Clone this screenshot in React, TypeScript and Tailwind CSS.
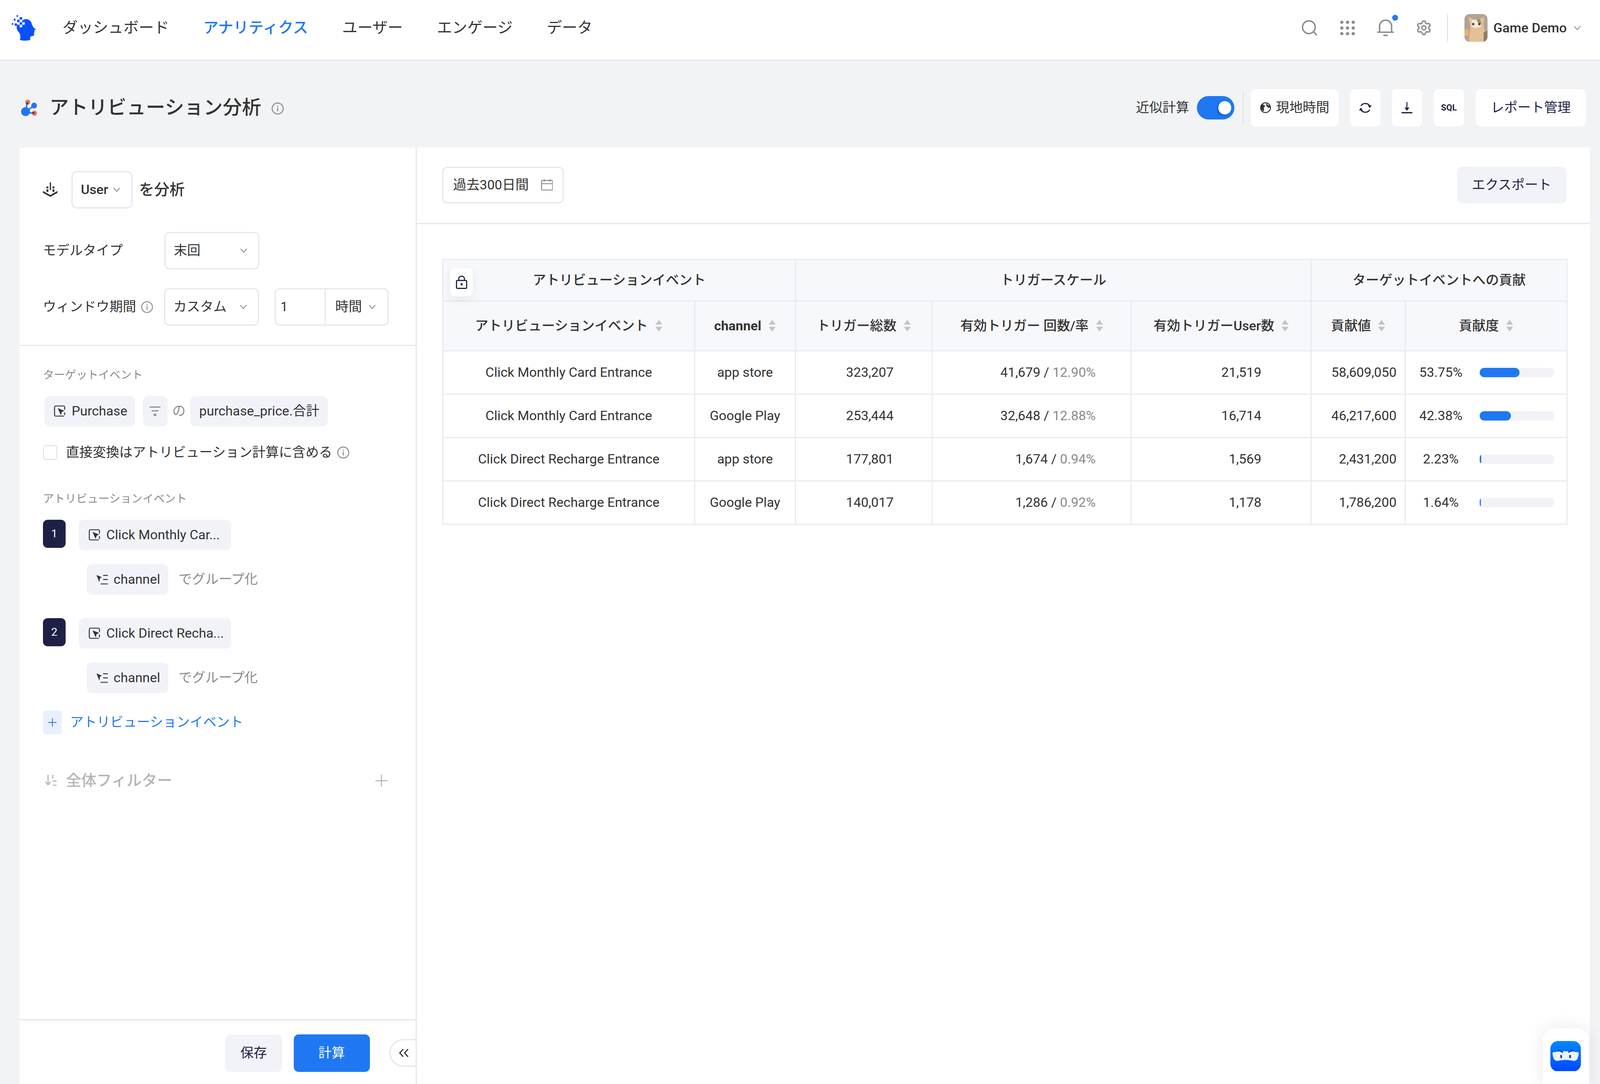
import type { ReactNode } from "react";
import { Settings } from "lucide-react";

// widths and type are in vw (reference px / 50.42): the browser window can be narrower than the 5042px reference
const navy = "#1e2145";

const Chevron = ({ className = "w-[0.436vw] h-auto shrink-0" }: { className?: string }) => (
	<svg viewBox="0 0 22 14" className={className} fill="none" stroke="#8a8a8a" strokeWidth="2.6">
		<path d="M1.5 1.5 11 12.5 20.5 1.5" />
	</svg>
);

const InfoIcon = ({ className = "w-[0.754vw] h-auto shrink-0" }: { className?: string }) => (
	<svg viewBox="0 0 38 38" className={className} fill="none">
		<circle cx="19" cy="19" r="17" stroke="#8a8a8a" strokeWidth="3" />
		<rect x="17.5" y="16" width="3" height="12" fill="#8a8a8a" />
		<rect x="17.5" y="10" width="3" height="3.4" fill="#8a8a8a" />
	</svg>
);

const EventIcon = () => (
	<svg viewBox="0 0 38 36" className="w-[0.754vw] h-auto shrink-0" fill="none">
		<path d="M34 14V6a4 4 0 0 0-4-4H6a4 4 0 0 0-4 4v24a4 4 0 0 0 4 4h26" stroke="#333" strokeWidth="3" />
		<path d="M12 9 33 17l-8 4-3 10z" fill="#333" />
		<path d="M34 22v9" stroke="#333" strokeWidth="3" />
	</svg>
);

const GroupIcon = () => (
	<svg viewBox="0 0 36 32" className="w-[0.714vw] h-auto shrink-0" fill="none">
		<path d="M0 2 17 9l-6 3-2 13z" fill="#333" />
		<path d="M21 3h15M21 16h15M13 30h23" stroke="#333" strokeWidth="3" />
	</svg>
);

const SortIcon = () => (
	<svg viewBox="0 0 24 37" className="w-[0.476vw] h-auto shrink-0" fill="#c4c4c4">
		<path d="M12 0 23 15H1z" />
		<path d="M12 37 23 22H1z" />
	</svg>
);

const Logo = () => (
	<svg viewBox="37 32 76 80" className="w-[1.507vw] h-auto shrink-0">
		<path
			d="M66 50 80 44c11 0 18 6 20 14 1 5 3 9 6 13l7 6-5 3 1 5-2 3 1 6-3 3-9 2-1 7 1 4c-10 3-24 3-34 0l2-4v-9c0-7-5-12-9-17-3-6-3-13-1-20z"
			fill="#0a50ff"
		/>
		<g fill="#0a50ff">
			<rect x="62" y="38" width="8" height="8" />
			<rect x="54" y="46" width="8" height="8" />
			<rect x="62" y="54" width="8" height="8" />
			<rect x="46" y="58" width="8" height="7" />
			<rect x="43" y="43" width="6" height="6" />
			<rect x="52" y="32" width="5" height="5" />
			<rect x="37" y="57" width="5" height="5" />
		</g>
		<g fill="#fff">
			<rect x="62" y="46" width="8" height="8" />
			<rect x="70" y="54" width="8" height="8" />
			<rect x="62" y="62" width="8" height="8" />
			<rect x="54" y="54" width="8" height="8" />
		</g>
	</svg>
);

const TitleIcon = () => (
	<svg viewBox="0 0 51 52" className="w-[1.011vw] h-auto shrink-0">
		<circle cx="21" cy="8" r="8" fill="#f4704a" />
		<ellipse cx="41" cy="19" rx="9" ry="9.5" fill="#1f78f2" />
		<ellipse cx="42" cy="43" rx="8" ry="8.5" fill="#f4704a" />
		<circle cx="14" cy="38" r="14" fill="#1f78f2" />
		<path d="M19 8 17 26M38 21 22 33M18 42h22" stroke="#1f78f2" strokeWidth="4.5" />
		<path d="M20 9 19 15M36 42h6" stroke="#1e2145" strokeWidth="4" />
	</svg>
);

const Avatar = () => (
	<svg
		viewBox="0 0 72 72"
		preserveAspectRatio="xMidYMid slice"
		className="w-[1.428vw] h-[71px] rounded-[13px] shrink-0"
	>
		<rect width="72" height="72" fill="#b3a295" />
		<path d="M0 42c6-2 12-2 18-1l-1 15H0z" fill="#eeb267" />
		<path d="M18 72c1-14 2-28 4-38-2-9-4-18-5-28l12 9h16l12-9-1 24c3 14 5 28 5 42z" fill="#e3c097" />
		<path d="M25 16c4-2 16-2 20 0l5 15c-5 7-21 7-26 0z" fill="#f3e8d8" />
		<path d="M38 14h9l4 13-10-5z" fill="#a88a66" />
		<circle cx="29" cy="26" r="3" fill="#4a3b2e" />
		<circle cx="45" cy="26" r="3" fill="#4a3b2e" />
		<path d="M56 48 72 40v32H56z" fill="#8f7d69" />
	</svg>
);

const Select = ({ label, className }: { label: string; className: string }) => (
	<div
		className={`flex items-center justify-between h-[96px] pl-[0.516vw] pr-[0.674vw] border-[3px] border-[#e5e7f0] rounded-[13px] bg-white ${className}`}
	>
		<span>{label}</span>
		<Chevron />
	</div>
);

const Pill = ({ children, className = "" }: { children: ReactNode; className?: string }) => (
	<div className={`flex items-center h-[78px] rounded-[13px] bg-[#f1f3f9] ${className}`}>{children}</div>
);

const EventRow = ({ num, label }: { num: number; label: string }) => (
	<div>
		<div className="flex items-start">
			<div className="flex items-center justify-center w-[1.428vw] h-[72px] rounded-[12px] bg-[#1e2145] text-white text-[0.694vw]">
				{num}
			</div>
			<Pill className="w-[9.52vw] ml-[0.833vw] pl-[0.595vw]">
				<EventIcon />
				<span className="ml-[0.357vw] whitespace-nowrap">{label}</span>
			</Pill>
		</div>
		<div className="flex items-center mt-[36px] ml-[2.737vw]">
			<Pill className="w-[5.117vw] pl-[0.615vw]">
				<GroupIcon />
				<span className="ml-[0.357vw]">channel</span>
			</Pill>
			<span className="ml-[0.635vw] text-[#8a8a8a]">でグループ化</span>
		</div>
	</div>
);

const rows = [
	{ name: "Click Monthly Card Entrance", channel: "app store", total: "323,207", valid: "41,679", rate: "12.90%", users: "21,519", value: "58,609,050", pct: "53.75%", bar: "w-[53.75%]" },
	{ name: "Click Monthly Card Entrance", channel: "Google Play", total: "253,444", valid: "32,648", rate: "12.88%", users: "16,714", value: "46,217,600", pct: "42.38%", bar: "w-[42.38%]" },
	{ name: "Click Direct Recharge Entrance", channel: "app store", total: "177,801", valid: "1,674", rate: "0.94%", users: "1,569", value: "2,431,200", pct: "2.23%", bar: "w-[2.23%]" },
	{ name: "Click Direct Recharge Entrance", channel: "Google Play", total: "140,017", valid: "1,286", rate: "0.92%", users: "1,178", value: "1,786,200", pct: "1.64%", bar: "w-[1.64%]" },
];

const heads = ["アトリビューションイベント", "channel", "トリガー総数", "有効トリガー 回数/率", "有効トリガーUser数", "貢献値", "貢献度"];

const cell = "border-[3px] border-[#e9ebf2] p-0";
const iconButton = "flex items-center justify-center w-[1.904vw] h-[96px] ml-[0.714vw] rounded-[13px] bg-white";

export default function App() {
	return (
		<div
			className="relative flex flex-col w-full h-screen overflow-hidden bg-[#f2f3f5] text-[#333] text-[0.833vw]"
			style={{ fontFamily: 'Roboto, "Noto Sans CJK JP", sans-serif' }}
		>
			<header className="flex items-center shrink-0 h-[156px] pb-[10px] pl-[0.734vw] pr-[1.19vw] bg-white border-b-[3px] border-[#e3e6ef]">
				<Logo />
				<nav className="flex gap-[2.13vw] ml-[1.666vw] text-[0.952vw]">
					<span>ダッシュボード</span>
					<span className="text-[#1f78f2] font-medium">アナリティクス</span>
					<span>ユーザー</span>
					<span>エンゲージ</span>
					<span>データ</span>
				</nav>
				<div className="flex items-center ml-auto">
					<svg viewBox="0 0 50 50" className="w-[0.992vw] h-auto" fill="none" stroke="#8a8a8a" strokeWidth="4.5">
						<circle cx="23" cy="23" r="20" />
						<path d="M37 37 48 48" />
					</svg>
					<svg viewBox="0 0 46 46" className="w-[0.912vw] h-auto ml-[1.428vw]" fill="#8a8a8a">
						{[5, 23, 41].map((y) =>
							[5, 23, 41].map((x) => <circle key={`${x}-${y}`} cx={x} cy={y} r="5" />),
						)}
					</svg>
					<div className="relative ml-[1.408vw] w-[1.031vw]">
						<svg viewBox="0 0 52 52" className="block w-full h-auto" fill="none" stroke="#8a8a8a" strokeWidth="4.5">
							<path d="M7 40V21a19 19 0 0 1 38 0v19" />
							<path d="M0 40h52" />
							<path d="M19 50h14" />
						</svg>
						<span className="absolute -top-[12px] -right-[0.258vw] w-[0.357vw] h-[0.357vw] rounded-full bg-[#1f78f2]" />
					</div>
					<Settings className="ml-[1.349vw] w-[1.031vw] h-auto text-[#8a8a8a]" strokeWidth={2} />
					<div className="w-[3px] h-[71px] ml-[0.932vw] bg-[#e3e6ef]" />
					<div className="ml-[1.031vw]">
						<Avatar />
					</div>
					<span className="ml-[0.377vw] font-medium whitespace-nowrap">Game Demo</span>
					<Chevron className="ml-[0.456vw] w-[0.436vw] h-auto" />
				</div>
			</header>

			<div className="flex items-center shrink-0 h-[96px] mt-[72px] mb-[54px] pl-[1.329vw] pr-[0.873vw]">
				<TitleIcon />
				<h1 className="ml-[0.754vw] text-[1.206vw] font-medium leading-none whitespace-nowrap">アトリビューション分析</h1>
				<InfoIcon className="ml-[0.635vw] mt-[4px] w-[0.773vw] h-auto" />
				<div className="flex items-center ml-auto">
					<span className="whitespace-nowrap">近似計算</span>
					<div className="flex items-center justify-end w-[2.36vw] h-[60px] ml-[0.476vw] pr-[0.198vw] rounded-full bg-[#1f78f2]">
						<div className="w-[0.813vw] h-[0.813vw] rounded-full bg-white shadow-[-3px_3px_6px_rgba(0,0,0,0.25)]" />
					</div>
					<div className="w-[3px] h-[90px] ml-[0.496vw] bg-[#e3e6ef]" />
					<div className="flex items-center justify-center w-[5.474vw] h-[96px] ml-[0.456vw] rounded-[13px] bg-white">
						<svg viewBox="0 0 34 34" className="w-[0.674vw] h-auto">
							<circle cx="17" cy="17" r="15.5" fill="#fff" stroke="#333" strokeWidth="3" />
							<path d="M6 7c4-1 7 1 9 4 1 3-1 4-3 5-2 2 0 5 1 8l-3 4C6 25 2 21 2 16z" fill="#333" />
							<path d="M20 3c3 2 4 4 4 6l5 1 3 6-5 2c-3-2-6-4-8-8z" fill="#333" />
						</svg>
						<span className="ml-[0.317vw] whitespace-nowrap">現地時間</span>
					</div>
					<div className={iconButton}>
						<svg viewBox="0 0 40 40" className="w-[0.793vw] h-auto" fill="none" stroke={navy} strokeWidth="3.6">
							<path d="M6 14A16.5 16.5 0 0 1 34 14" />
							<path d="M34 26A16.5 16.5 0 0 1 6 26" />
							<path d="M28 12h12l-6 9z" fill={navy} stroke="none" />
							<path d="M0 28h12l-6-9z" fill={navy} stroke="none" />
						</svg>
					</div>
					<div className={iconButton}>
						<svg viewBox="0 0 34 36" className="w-[0.674vw] h-auto" fill={navy}>
							<rect x="15.5" y="0" width="3" height="24" />
							<path d="M9 18h16l-8 10z" />
							<rect x="0" y="32" width="34" height="4" />
						</svg>
					</div>
					<div className={`${iconButton} text-[0.536vw] font-bold text-[#1e2145]`}>SQL</div>
					<div className="flex items-center justify-center w-[6.902vw] h-[96px] ml-[0.714vw] rounded-[13px] bg-white text-[#1e2145] whitespace-nowrap">
						レポート管理
					</div>
				</div>
			</div>

			<main className="flex flex-1 min-h-0 ml-[1.23vw] mr-[0.635vw]">
				<aside className="flex flex-col w-[24.81vw] shrink-0 bg-white border-r-[3px] border-[#e3e6ef]">
					<section className="pt-[60px] pb-[49px] pl-[1.448vw] border-b-[3px] border-[#e3e6ef]">
						<div className="flex items-center">
							<svg viewBox="0 0 46 46" className="w-[0.912vw] h-auto shrink-0" fill="#333">
								<rect x="21.5" y="0" width="4" height="24" />
								<rect x="11" y="13" width="6" height="6" />
								<rect x="30" y="13" width="6" height="6" />
								<rect x="11" y="22" width="6" height="8" />
								<rect x="30" y="22" width="6" height="8" />
								<path d="M0 27 23 40 46 27v6L23 46 0 33z" />
							</svg>
							<div className="flex items-center justify-between w-[3.808vw] h-[96px] ml-[0.873vw] pl-[0.516vw] pr-[0.674vw] border-[3px] border-[#e5e7f0] rounded-[13px] font-medium">
								<span>User</span>
								<Chevron />
							</div>
							<span className="ml-[0.416vw] text-[0.952vw] font-medium">を分析</span>
						</div>
						<div className="flex items-center mt-[60px]">
							<span className="w-[7.596vw]">モデルタイプ</span>
							<Select label="末回" className="w-[5.93vw]" />
						</div>
						<div className="flex items-center mt-[48px]">
							<span className="whitespace-nowrap">ウィンドウ期間</span>
							<InfoIcon className="ml-[0.297vw] w-[0.754vw] h-auto" />
							<Select label="カスタム" className="w-[5.93vw] ml-[0.694vw]" />
							<div className="flex w-[7.12vw] h-[96px] ml-[0.992vw] border-[3px] border-[#e5e7f0] rounded-[13px]">
								<span className="flex items-center w-[3.114vw] pl-[0.278vw] border-r-[3px] border-[#e5e7f0]">1</span>
								<div className="flex flex-1 items-center justify-between pl-[0.595vw] pr-[0.734vw]">
									<span>時間</span>
									<Chevron />
								</div>
							</div>
						</div>
					</section>

					<section className="flex-1 pt-[54px] pl-[1.448vw] pr-[1.745vw]">
						<div className="text-[0.694vw] leading-[42px] text-[#8a8a8a]">ターゲットイベント</div>
						<div className="flex items-center mt-[32px] ml-[0.099vw]">
							<Pill className="w-[5.672vw] pl-[0.595vw]">
								<EventIcon />
								<span className="ml-[0.357vw]">Purchase</span>
							</Pill>
							<Pill className="justify-center w-[1.547vw] ml-[0.476vw]">
								<svg viewBox="0 0 34 30" className="w-[0.674vw] h-auto" fill="#8a8a8a">
									<rect x="0" y="0" width="34" height="3.5" />
									<rect x="6" y="12" width="22" height="3.5" />
									<rect x="13" y="23" width="8" height="7" />
								</svg>
							</Pill>
							<span className="ml-[0.297vw] text-[#8a8a8a]">の</span>
							<Pill className="w-[8.588vw] ml-[0.297vw] pl-[0.555vw] whitespace-nowrap">purchase_price.合計</Pill>
						</div>
						<div className="flex items-center h-[60px] mt-[37px]">
							<div className="w-[0.912vw] h-[0.912vw] border-[3px] border-[#e5e7f0] rounded-[6px]" />
							<span className="ml-[0.535vw] whitespace-nowrap">直接変換はアトリビューション計算に含める</span>
							<InfoIcon className="ml-[0.297vw] w-[0.773vw] h-auto" />
						</div>
						<div className="mt-[68px] text-[0.694vw] leading-[42px] text-[#8a8a8a]">アトリビューションイベント</div>
						<div className="mt-[32px]">
							<EventRow num={1} label="Click Monthly Car..." />
						</div>
						<div className="mt-[60px]">
							<EventRow num={2} label="Click Direct Recha..." />
						</div>
						<div className="flex items-center mt-[45px]">
							<div className="flex items-center justify-center w-[1.19vw] h-[60px] rounded-[6px] bg-[#e9effc]">
								<svg viewBox="0 0 30 30" className="w-[0.595vw] h-auto" stroke="#1f78f2" strokeWidth="2.6">
									<path d="M15 2v26M2 15h26" />
								</svg>
							</div>
							<span className="ml-[0.516vw] text-[#1f78f2]">アトリビューションイベント</span>
						</div>
						<div className="flex items-center h-[70px] mt-[84px] ml-[0.099vw]">
							<svg viewBox="0 0 38 36" className="w-[0.754vw] h-auto shrink-0" fill="none" stroke="#b5b5b5" strokeWidth="3.4">
								<path d="M11 0v30M3 22l8 10 8-10" />
								<path d="M26 0v12M26 20h12M26 33h12" />
							</svg>
							<span className="ml-[0.595vw] text-[0.952vw] font-medium text-[#b5b5b5]">全体フィルター</span>
							<svg viewBox="0 0 38 38" className="w-[0.754vw] h-auto ml-auto" stroke="#b5b5b5" strokeWidth="3.4">
								<path d="M19 0v38M0 19h38" />
							</svg>
						</div>
					</section>

					<footer className="flex justify-end items-start shrink-0 h-[166px] pt-[36px] border-t-[3px] border-[#e3e6ef]">
						<button type="button" className="w-[3.57vw] h-[96px] rounded-[13px] bg-[#f1f3f9] text-[#1e2145]">
							保存
						</button>
						<button type="button" className="w-[4.76vw] h-[96px] ml-[0.714vw] rounded-[13px] bg-[#1f78f2] text-white">
							計算
						</button>
						<div className="flex items-center w-[1.626vw] h-[71px] ml-[1.23vw] mt-[12px] pl-[0.516vw] rounded-l-full border-[3px] border-r-0 border-[#e3e6ef]">
							<svg viewBox="0 0 32 26" className="w-[0.635vw] h-auto" fill="none" stroke="#333" strokeWidth="3.6">
								<path d="M14 1 3 13l11 12M29 1 18 13l11 12" />
							</svg>
						</div>
					</footer>
				</aside>

				<div className="flex-1 min-w-0 bg-white">
					<div className="flex items-start justify-between h-[196px] pt-[49px] pl-[1.607vw] pr-[1.468vw] border-b-[3px] border-[#e3e6ef]">
						<div className="flex items-center w-[7.576vw] h-[94px] pl-[0.595vw] border-[3px] border-[#e5e7f0] rounded-[13px]">
							<span className="whitespace-nowrap">過去300日間</span>
							<svg viewBox="0 0 38 36" className="w-[0.754vw] h-auto ml-[0.754vw]" fill="none" stroke="#8a8a8a" strokeWidth="3">
								<rect x="1.5" y="4" width="35" height="30" rx="3" />
								<path d="M1.5 14h35M10 0v7M28 0v7" />
							</svg>
						</div>
						<button type="button" className="w-[6.843vw] h-[94px] rounded-[13px] bg-[#f1f3f9] text-[#1e2145]">
							エクスポート
						</button>
					</div>

					<div className="relative mt-[89px] ml-[1.607vw] w-[70.25vw]">
						<table className="w-full table-fixed border-collapse">
							<colgroup>
								<col className="w-[15.728vw]" />
								<col className="w-[6.307vw]" />
								<col className="w-[8.548vw]" />
								<col className="w-[12.435vw]" />
								<col className="w-[11.246vw]" />
								<col className="w-[5.89vw]" />
								<col className="w-[10.095vw]" />
							</colgroup>
							<thead className="bg-[#f7f8fb]">
								<tr className="h-[106px]">
									<th colSpan={2} className={`${cell} font-medium`}>アトリビューションイベント</th>
									<th colSpan={3} className={`${cell} font-medium`}>トリガースケール</th>
									<th colSpan={2} className={`${cell} font-medium`}>ターゲットイベントへの貢献</th>
								</tr>
								<tr className="h-[128px]">
									{heads.map((h) => (
										<th key={h} className={`${cell} font-medium`}>
											<div className="flex items-center justify-center gap-[0.436vw] whitespace-nowrap">
												<span className={h === "channel" ? "font-bold" : ""}>{h}</span>
												<SortIcon />
											</div>
										</th>
									))}
								</tr>
							</thead>
							<tbody>
								{rows.map((r) => (
									<tr key={r.name + r.channel} className="h-[111px]">
										<td className={`${cell} text-center`}>{r.name}</td>
										<td className={`${cell} text-center`}>{r.channel}</td>
										<td className={`${cell} text-right pr-[2.38vw]`}>{r.total}</td>
										<td className={`${cell} text-right pr-[2.182vw]`}>
											{r.valid} / <span className="text-[#8a8a8a]">{r.rate}</span>
										</td>
										<td className={`${cell} text-right pr-[3.074vw]`}>{r.users}</td>
										<td className={`${cell} text-right pr-[0.516vw]`}>{r.value}</td>
										<td className={cell}>
											<div className="flex items-center">
												<span className="w-[4.6vw] pr-[0.24vw] text-center">{r.pct}</span>
												<div className="w-[4.641vw] h-[24px] rounded-[8px] bg-[#f1f3f7] overflow-hidden">
													<div className={`h-full rounded-[12px] bg-[#1f78f2] ${r.bar}`} />
												</div>
											</div>
										</td>
									</tr>
								))}
							</tbody>
						</table>
						<div className="absolute top-[24px] left-[0.476vw] flex items-center justify-center w-[1.428vw] h-[72px] rounded-[12px] bg-white shadow-[0_8px_24px_rgba(30,33,69,0.08)]">
							<svg viewBox="0 0 36 42" className="w-[0.714vw] h-auto" fill="none" stroke={navy} strokeWidth="3.6">
								<rect x="2" y="15" width="32" height="25" rx="3" />
								<path d="M9 15V9a9 7.5 0 0 1 18 0v6" />
								<circle cx="18" cy="27" r="3.5" fill={navy} stroke="none" />
							</svg>
						</div>
					</div>
				</div>
			</main>

			<div className="absolute right-[0.714vw] bottom-0 flex items-center justify-center w-[2.856vw] h-[143px] rounded-t-[30px] bg-white shadow-[0_0_40px_rgba(30,33,69,0.1)]">
				<svg viewBox="0 0 96 96" className="w-[1.904vw] h-auto">
					<defs>
						<linearGradient id="bot" x1="0" y1="0" x2="0" y2="1">
							<stop offset="0" stopColor="#0088ff" />
							<stop offset="1" stopColor="#0048ff" />
						</linearGradient>
					</defs>
					<rect width="96" height="96" rx="24" fill="url(#bot)" />
					<path d="M7 36c24-5 58-5 82 0 0 10-2 19-7 24-4 2-8 3-12 2-14-3-30-3-44 0-4 1-8 0-12-2-5-5-7-14-7-24z" fill="#eaf3fc" />
					<path d="M27 29l11 6M69 29l-11 6" stroke="#0c3b96" strokeWidth="4" strokeLinecap="round" />
					<ellipse cx="34" cy="49" rx="2.8" ry="5.5" fill="#0c3b96" />
					<ellipse cx="62" cy="49" rx="2.8" ry="5.5" fill="#0c3b96" />
				</svg>
			</div>
		</div>
	);
}
